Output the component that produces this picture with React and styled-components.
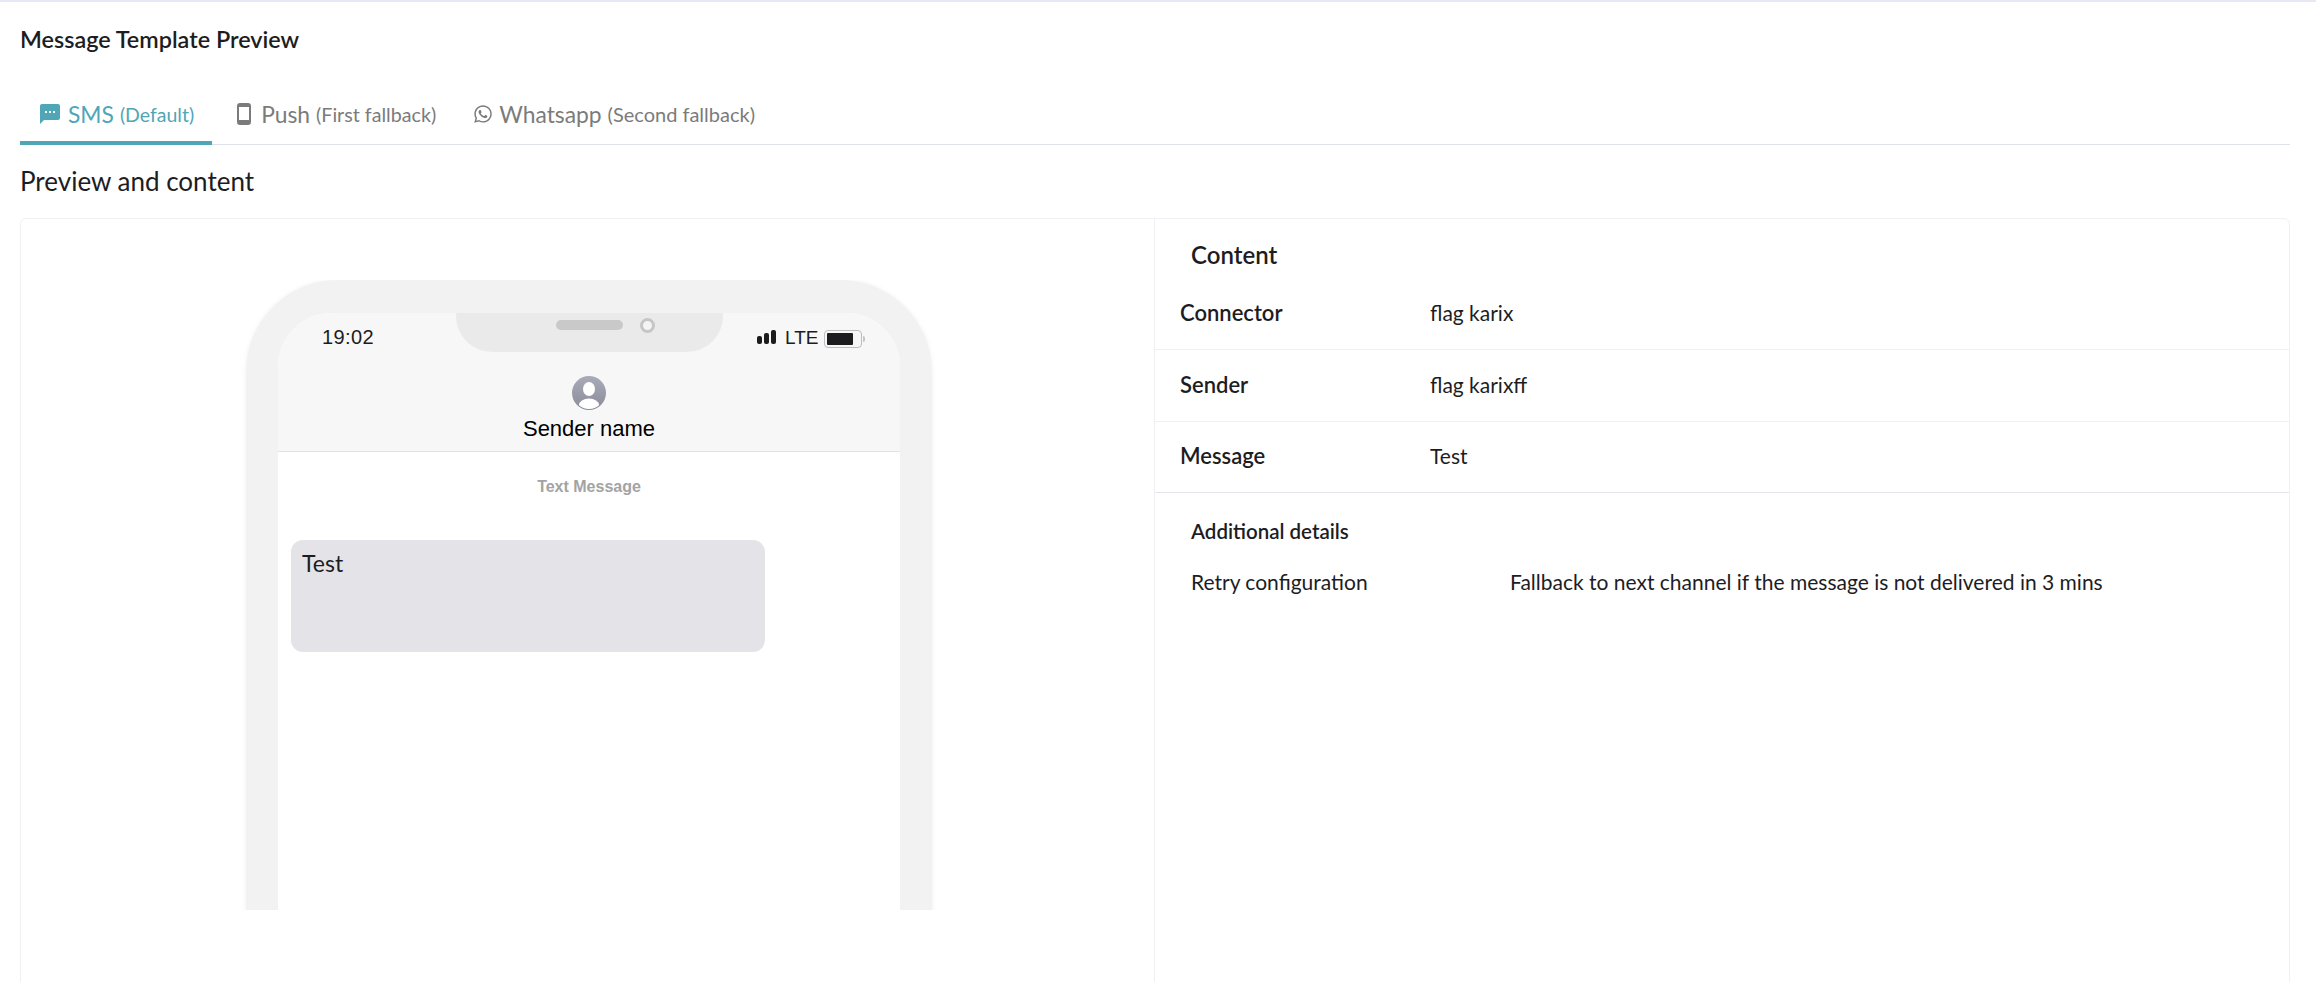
import React from 'react'
import styled, { createGlobalStyle } from 'styled-components'
import { MdSms } from 'react-icons/md'
import { FaWhatsapp } from 'react-icons/fa'

const GlobalStyle = createGlobalStyle`
  html, body {
    margin: 0;
    padding: 0;
    background: #fff;
    overflow: hidden;
  }
  * { box-sizing: border-box; }
`

const Page = styled.div`
  height: 982px;
  overflow: hidden;
  border-top: 2px solid #e6e8f5;
  padding: 0 26px 0 20px;
  font-family: Lato, 'Noto Sans', sans-serif;
  color: #1d1d1f;
`

const Title = styled.h1`
  margin: 0;
  height: 74px;
  padding-top: 23px;
  font-size: 23.4px;
  line-height: 28px;
  font-weight: 600;
`

const TabBar = styled.div`
  display: flex;
  height: 69px;
  border-bottom: 1px solid #dfe1e8;
`

const Tab = styled.div`
  display: flex;
  align-items: center;
  height: 69px;
  padding: 11px ${p => p.$pr}px 0 ${p => p.$pl}px;
  color: ${p => (p.$active ? '#4fa6b6' : '#7b7b7b')};
  border-bottom: 4px solid ${p => (p.$active ? '#4fa6b6' : 'transparent')};
  font-size: 22.8px;
  white-space: nowrap;
`

const TabIcon = styled.span`
  display: flex;
  width: ${p => p.$w}px;
`

const TabNote = styled.span`
  font-size: ${p => p.$size || 20}px;
  margin-left: 6px;
`

const SectionTitle = styled.h2`
  margin: 0;
  height: 73px;
  padding-top: 20px;
  font-size: 26px;
  line-height: 32px;
  font-weight: 400;
`

const Card = styled.div`
  display: grid;
  grid-template-columns: 1134px 1fr;
  height: 780px;
  border: 1px solid #f0f1f5;
  border-radius: 6px;
`

const PreviewPanel = styled.div`
  display: flex;
  justify-content: center;
  padding: 61px 0 0 3px;
  border-right: 1px solid #eff0f4;
`

const PhoneClip = styled.div`
  width: 696px;
  height: 630px;
  padding: 0 5px;
  overflow: hidden;
`

const Phone = styled.div`
  height: 700px;
  padding: 33px 32px 0;
  background: #f2f2f2;
  border-radius: 92px 92px 0 0;
  box-shadow: 0 0 5px rgba(0, 0, 0, 0.06);
`

const Screen = styled.div`
  height: 100%;
  background: #fff;
  border-radius: 54px 54px 0 0;
  overflow: hidden;
`

const ScreenHead = styled.div`
  height: 139px;
  background: #f7f7f7;
  border-bottom: 1px solid #e2e2e2;
  font-family: 'Liberation Sans', Arial, sans-serif;
`

const StatusBar = styled.div`
  display: flex;
  height: 63px;
  padding-left: 44px;
`

const Clock = styled.span`
  width: 134px;
  margin-top: 12px;
  font-size: 20px;
  line-height: 24px;
  color: #1c1c1e;
  letter-spacing: 0.4px;
`

const Notch = styled.div`
  display: flex;
  gap: 17px;
  width: 267px;
  height: 39px;
  padding: 7px 0 0 100px;
  background: #ebeaea;
  border-radius: 0 0 36px 36px;
`

const Speaker = styled.div`
  width: 67px;
  height: 10px;
  background: #c9c9c9;
  border-radius: 5px;
`

const Camera = styled.div`
  width: 15px;
  height: 15px;
  margin-top: -2px;
  background: #f4f4f4;
  border: 3px solid #c6c6c6;
  border-radius: 50%;
`

const Signals = styled.div`
  display: flex;
  align-items: flex-start;
  gap: 8px;
  margin-left: 34px;
  padding-top: 17px;
`

const Lte = styled.span`
  font-size: 19px;
  line-height: 16px;
  color: #1c1c1e;
`

const Battery = styled.div`
  position: relative;
  width: 38px;
  height: 18px;
  margin-left: -2px;
  padding: 2px;
  border: 1px solid #bdbdbd;
  border-radius: 4px;
  &::before {
    content: '';
    display: block;
    width: 26px;
    height: 12px;
    background: #1c1c1e;
    border-radius: 1px;
  }
  &::after {
    content: '';
    position: absolute;
    right: -4px;
    top: 5px;
    width: 2px;
    height: 6px;
    background: #c4c4c4;
    border-radius: 0 2px 2px 0;
  }
`

const Sender = styled.div`
  display: flex;
  flex-direction: column;
  align-items: center;
`

const SenderName = styled.span`
  margin-top: 5px;
  font-size: 22px;
  line-height: 28px;
  color: #000;
`

const ThreadLabel = styled.div`
  margin-top: 25px;
  text-align: center;
  font-family: 'Liberation Sans', Arial, sans-serif;
  font-size: 16px;
  line-height: 20px;
  font-weight: 700;
  color: #a3a3a3;
`

const Bubble = styled.div`
  width: 474px;
  height: 112px;
  margin: 43px 0 0 13px;
  padding: 9px 11px;
  background: #e4e4e8;
  border-radius: 12px;
  font-size: 23px;
  line-height: 28px;
  color: #1d1d1f;
`

const ContentPanel = styled.div`
  display: flex;
  flex-direction: column;
`

const PanelTitle = styled.h3`
  margin: 0;
  height: 59px;
  padding: 20px 0 0 36px;
  font-size: 24px;
  line-height: 32px;
  font-weight: 600;
`

const ContentRow = styled.div`
  display: grid;
  grid-template-columns: 250px 1fr;
  align-items: center;
  height: ${p => p.$h}px;
  padding: 0 0 3px 25px;
  border-bottom: 1px solid ${p => (p.$strong ? '#e3e4ee' : '#eff0f3')};
  font-size: 21px;
`

const RowLabel = styled.span`
  font-size: 22px;
  font-weight: 600;
`

const SubTitle = styled.h4`
  margin: 0;
  height: 70px;
  padding: 22px 0 0 36px;
  font-size: 20.5px;
  line-height: 32px;
  font-weight: 600;
`

const DetailRow = styled.div`
  display: grid;
  grid-template-columns: 319px 1fr;
  padding: 5px 0 0 36px;
  font-size: 21px;
  line-height: 28px;
`

const SmsIcon = () => (
  <MdSms size={24} style={{ margin: '0 0 0 -2px' }} />
)

const PushIcon = () => (
  <svg width="14" height="22" viewBox="0 0 14 22">
    <rect x="1" y="1" width="12" height="20" rx="2" fill="none" stroke="#7b7b7b" strokeWidth="2" />
    <rect x="1" y="17" width="12" height="4" rx="1" fill="#7b7b7b" />
    <rect x="1" y="1" width="12" height="3" rx="1" fill="#7b7b7b" />
  </svg>
)

const AvatarIcon = () => (
  <svg width="34" height="34" viewBox="0 0 34 34">
    <defs>
      <linearGradient id="avatarFill" x1="0" y1="0" x2="0" y2="1">
        <stop offset="0" stopColor="#a9abb8" />
        <stop offset="1" stopColor="#8a8c99" />
      </linearGradient>
      <clipPath id="avatarClip">
        <circle cx="17" cy="17" r="16" />
      </clipPath>
    </defs>
    <circle cx="17" cy="17" r="17" fill="url(#avatarFill)" />
    <g clipPath="url(#avatarClip)" fill="#fff">
      <ellipse cx="17" cy="13" rx="6" ry="7" />
      <ellipse cx="17" cy="29" rx="10" ry="6.5" />
    </g>
  </svg>
)

const SignalIcon = () => (
  <svg width="20" height="14" viewBox="0 0 20 14">
    <rect x="0" y="6" width="5" height="8" rx="2" fill="#1c1c1e" />
    <rect x="7" y="3" width="5" height="11" rx="2" fill="#1c1c1e" />
    <rect x="14" y="0" width="5" height="14" rx="2" fill="#1c1c1e" />
  </svg>
)

const App = () => (
  <>
    <GlobalStyle />
    <Page>
      <Title>Message Template Preview</Title>
      <TabBar>
        <Tab $active $pl={20} $pr={18}>
          <TabIcon $w={28}><SmsIcon /></TabIcon>
          SMS<TabNote $size={19.5}>(Default)</TabNote>
        </Tab>
        <Tab $pl={25} $pr={20}>
          <TabIcon $w={24}><PushIcon /></TabIcon>
          Push<TabNote $size={19.7}>(First fallback)</TabNote>
        </Tab>
        <Tab $pl={17} $pr={0}>
          <TabIcon $w={26}><FaWhatsapp size={20} /></TabIcon>
          Whatsapp<TabNote>(Second fallback)</TabNote>
        </Tab>
      </TabBar>
      <SectionTitle>Preview and content</SectionTitle>
      <Card>
        <PreviewPanel>
          <PhoneClip>
            <Phone>
              <Screen>
                <ScreenHead>
                  <StatusBar>
                    <Clock>19:02</Clock>
                    <Notch>
                      <Speaker />
                      <Camera />
                    </Notch>
                    <Signals>
                      <SignalIcon />
                      <Lte>LTE</Lte>
                      <Battery />
                    </Signals>
                  </StatusBar>
                  <Sender>
                    <AvatarIcon />
                    <SenderName>Sender name</SenderName>
                  </Sender>
                </ScreenHead>
                <ThreadLabel>Text Message</ThreadLabel>
                <Bubble>Test</Bubble>
              </Screen>
            </Phone>
          </PhoneClip>
        </PreviewPanel>
        <ContentPanel>
          <PanelTitle>Content</PanelTitle>
          <ContentRow $h={72}>
            <RowLabel>Connector</RowLabel>
            <span>flag karix</span>
          </ContentRow>
          <ContentRow $h={72}>
            <RowLabel>Sender</RowLabel>
            <span>flag karixff</span>
          </ContentRow>
          <ContentRow $h={71} $strong>
            <RowLabel>Message</RowLabel>
            <span>Test</span>
          </ContentRow>
          <SubTitle>Additional details</SubTitle>
          <DetailRow>
            <span>Retry configuration</span>
            <span>Fallback to next channel if the message is not delivered in 3 mins</span>
          </DetailRow>
        </ContentPanel>
      </Card>
    </Page>
  </>
)

export default App
